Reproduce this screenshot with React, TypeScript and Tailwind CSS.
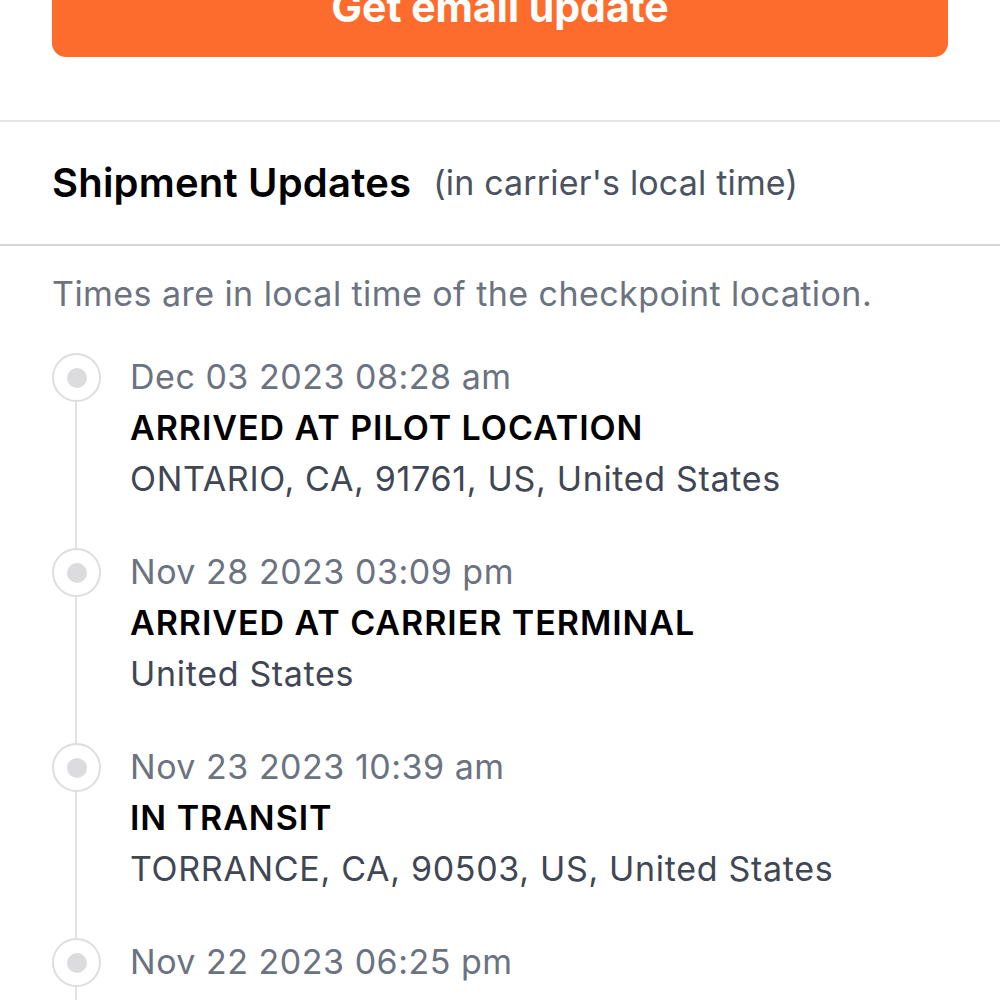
import React from "react";

const items = [
  { date: "Dec 03 2023 08:28 am", title: "ARRIVED AT PILOT LOCATION", loc: "ONTARIO, CA, 91761, US, United States" },
  { date: "Nov 28 2023 03:09 pm", title: "ARRIVED AT CARRIER TERMINAL", loc: "United States" },
  { date: "Nov 23 2023 10:39 am", title: "IN TRANSIT", loc: "TORRANCE, CA, 90503, US, United States" },
  { date: "Nov 22 2023 06:25 pm", title: "PICKED UP", loc: "LOS ANGELES, CA, US, United States" },
];

export default function App() {
  return (
    <div className="w-[1000px] h-[1000px] overflow-hidden bg-white" style={{ fontFamily: "Inter, 'Noto Sans', sans-serif" }}>
      <div className="px-[52px]">
        <div className="mt-[-43px] h-[100px] rounded-[14px] bg-[#fe6c2d] flex items-center justify-center">
          <span className="text-white font-bold text-[41px] leading-none">Get email update</span>
        </div>
      </div>
      <div className="mt-[63px] h-[2px] bg-[#e5e5e7]" />
      <div className="h-[122px] px-[52px] flex items-center">
        <span className="text-black font-semibold text-[40px] leading-none tracking-[0.005em]">Shipment Updates</span>
        <span className="ml-[22px] text-[#4b5260] text-[34px] leading-none tracking-[0.005em]">(in carrier's local time)</span>
      </div>
      <div className="h-[2px] bg-[#d6d6da]" />
      <div className="px-[52px] pt-[30px]">
        <div className="text-[#6b7280] text-[34px] leading-[36px] tracking-[0.013em]">Times are in local time of the checkpoint location.</div>
        <div className="mt-[41px] relative">
          <div className="absolute left-[23px] top-[24px] bottom-0 w-[2px] bg-[#e2e2e4]" />
          {items.map((it, i) => (
            <div key={i} className="relative flex h-[195px]">
              <div className="w-[78px] shrink-0">
                <div className="relative w-[49px] h-[49px] rounded-full border-2 border-[#dedee0] bg-white flex items-center justify-center">
                  <div className="w-[20px] h-[20px] rounded-full bg-[#dcdcde]" />
                </div>
              </div>
              <div className="flex flex-col">
                <div className="text-[#6b7280] text-[34px] leading-[51px] mt-[-2px] tracking-[0.015em]">{it.date}</div>
                <div className="text-black font-semibold text-[34px] leading-[51px] tracking-[0.028em]">{it.title}</div>
                <div className="text-[#3f4654] text-[34px] leading-[51px] tracking-[0.02em]">{it.loc}</div>
              </div>
            </div>
          ))}
        </div>
      </div>
    </div>
  );
}
